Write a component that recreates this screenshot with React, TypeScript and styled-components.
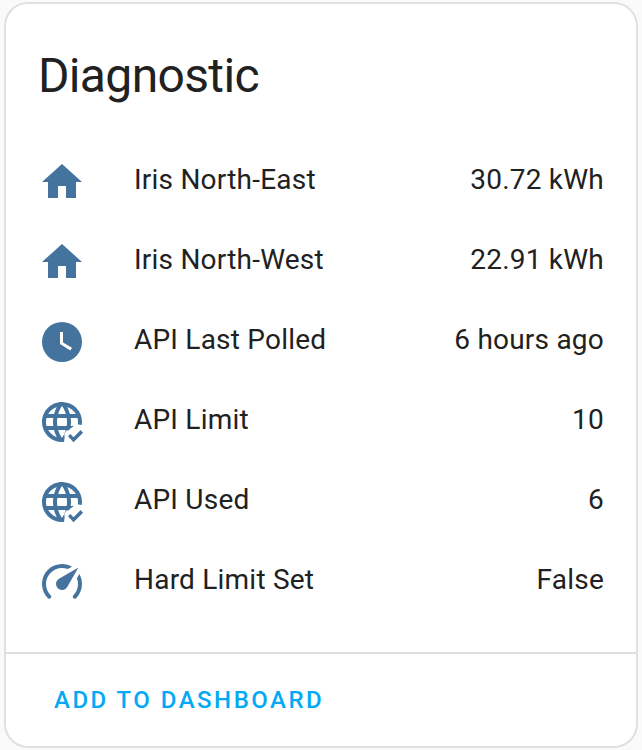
import React from "react";
import styled, { createGlobalStyle } from "styled-components";

const GlobalStyle = createGlobalStyle`
  *, *::before, *::after { box-sizing: border-box; }
  body {
    margin: 0;
    background: #fafafa;
    color: #212121;
    font-family: Roboto, "Liberation Sans", sans-serif;
    -webkit-font-smoothing: antialiased;
  }
`;

const Page = styled.main`
  height: 750px;
  padding: 2px 4px;
`;

const Card = styled.section`
  display: flex;
  flex-direction: column;
  height: 746px;
  background: #fff;
  border: 2px solid #e0e0e0;
  border-radius: 24px;
`;

const Title = styled.h1`
  margin: 0;
  padding: 24px 32px 0;
  font-size: 48px;
  font-weight: 400;
  line-height: 96px;
  letter-spacing: -0.65px;
`;

const Rows = styled.div`
  flex: 1;
  padding: 18px 32px 0;
`;

const Row = styled.div`
  display: flex;
  align-items: center;
  height: 80px;
  font-size: 28px;
  line-height: 40px;
  letter-spacing: 0.22px;
`;

const Icon = styled.svg`
  flex: none;
  width: 48px;
  height: 48px;
  margin-right: 48px;
  fill: #44739e;
`;

const Label = styled.span`
  flex: 1;
  padding-bottom: 4px;
`;

const Value = styled.span`
  padding-bottom: 4px;
`;

const Actions = styled.footer`
  display: flex;
  align-items: center;
  height: 94px;
  padding: 0 16px;
  border-top: 2px solid #e0e0e0;
`;

const ActionButton = styled.button`
  height: 72px;
  padding: 0 32px;
  border: 0;
  background: none;
  color: #03a9f4;
  font: 500 24px/72px Roboto, "Liberation Sans", sans-serif;
  letter-spacing: 2.48px;
  text-transform: uppercase;
`;

const HOME = "M10,20V14H14V20H19V12H22L12,3L2,12H5V20H10Z";
const CLOCK =
  "M12,2A10,10 0 0,0 2,12A10,10 0 0,0 12,22A10,10 0 0,0 22,12A10,10 0 0,0 12,2M16.2,16.2L11,13V7H12.5V12.2L17,14.9L16.2,16.2Z";
const GAUGE =
  "M12,16A3,3 0 0,1 9,13C9,11.88 9.61,10.9 10.5,10.39L20.21,4.77L14.68,14.35C14.18,15.33 13.17,16 12,16M12,3C13.81,3 15.5,3.5 16.97,4.32L14.87,5.53C14,5.19 13,5 12,5A8,8 0 0,0 4,13C4,15.21 4.89,17.21 6.34,18.65H6.35C6.74,19.04 6.74,19.67 6.35,20.06C5.96,20.45 5.32,20.45 4.93,20.07V20.07C3.12,18.26 2,15.76 2,13A10,10 0 0,1 12,3M22,13C22,15.76 20.88,18.26 19.07,20.07V20.07C18.68,20.45 18.05,20.45 17.66,20.06C17.27,19.67 17.27,19.04 17.66,18.65V18.65C19.11,17.2 20,15.21 20,13C20,12 19.81,11 19.46,10.1L20.67,8C21.5,9.5 22,11.18 22,13Z";
const WEB =
  "M16.36,14C16.44,13.34 16.5,12.68 16.5,12C16.5,11.32 16.44,10.66 16.36,10H19.74C19.9,10.64 20,11.31 20,12C20,12.69 19.9,13.36 19.74,14M14.59,19.56C15.19,18.45 15.65,17.25 15.97,16H18.92C17.96,17.65 16.43,18.93 14.59,19.56M14.34,14H9.66C9.56,13.34 9.5,12.68 9.5,12C9.5,11.32 9.56,10.65 9.66,10H14.34C14.43,10.65 14.5,11.32 14.5,12C14.5,12.68 14.43,13.34 14.34,14M12,19.96C11.17,18.76 10.5,17.43 10.09,16H13.91C13.5,17.43 12.83,18.76 12,19.96M8,8H5.08C6.03,6.34 7.57,5.06 9.4,4.44C8.8,5.55 8.35,6.75 8,8M5.08,16H8C8.35,17.25 8.8,18.45 9.4,19.56C7.57,18.93 6.03,17.65 5.08,16M4.26,14C4.1,13.36 4,12.69 4,12C4,11.31 4.1,10.64 4.26,10H7.64C7.56,10.66 7.5,11.32 7.5,12C7.5,12.68 7.56,13.34 7.64,14M12,4.03C12.83,5.23 13.5,6.57 13.91,8H10.09C10.5,6.57 11.17,5.23 12,4.03M18.92,8H15.97C15.65,6.75 15.19,5.55 14.59,4.44C16.43,5.07 17.96,6.34 18.92,8M12,2C6.47,2 2,6.5 2,12A10,10 0 0,0 12,22A10,10 0 0,0 22,12A10,10 0 0,0 12,2Z";
const CHECK = "M17.75 22.16L15 19.16L16.16 18L17.75 19.59L21.34 16L22.5 17.41L17.75 22.16Z";

type IconName = "home" | "clock" | "web" | "gauge";

const paths: Record<Exclude<IconName, "web">, string> = { home: HOME, clock: CLOCK, gauge: GAUGE };

function EntityIcon({ name }: { name: IconName }) {
  if (name === "web") {
    return (
      <Icon viewBox="0 0 24 24" aria-hidden="true">
        <clipPath id="globe-notch">
          <path d="M0 0H24V13.5H21.8L19.7 13.1L18 14L16.2 15.2L15.6 16L14.2 16.4L13.2 18L13.3 19.6L12.8 24H0Z" />
        </clipPath>
        <path d={WEB} fillRule="evenodd" clipPath="url(#globe-notch)" />
        <path d={CHECK} />
      </Icon>
    );
  }
  return (
    <Icon viewBox="0 0 24 24" aria-hidden="true">
      <path d={paths[name]} />
    </Icon>
  );
}

const entities: { icon: IconName; label: string; value: string }[] = [
  { icon: "home", label: "Iris North-East", value: "30.72 kWh" },
  { icon: "home", label: "Iris North-West", value: "22.91 kWh" },
  { icon: "clock", label: "API Last Polled", value: "6 hours ago" },
  { icon: "web", label: "API Limit", value: "10" },
  { icon: "web", label: "API Used", value: "6" },
  { icon: "gauge", label: "Hard Limit Set", value: "False" },
];

export default function App() {
  return (
    <>
      <GlobalStyle />
      <Page>
        <Card>
          <Title>Diagnostic</Title>
          <Rows>
            {entities.map((e) => (
              <Row key={e.label}>
                <EntityIcon name={e.icon} />
                <Label>{e.label}</Label>
                <Value>{e.value}</Value>
              </Row>
            ))}
          </Rows>
          <Actions>
            <ActionButton>Add to dashboard</ActionButton>
          </Actions>
        </Card>
      </Page>
    </>
  );
}
